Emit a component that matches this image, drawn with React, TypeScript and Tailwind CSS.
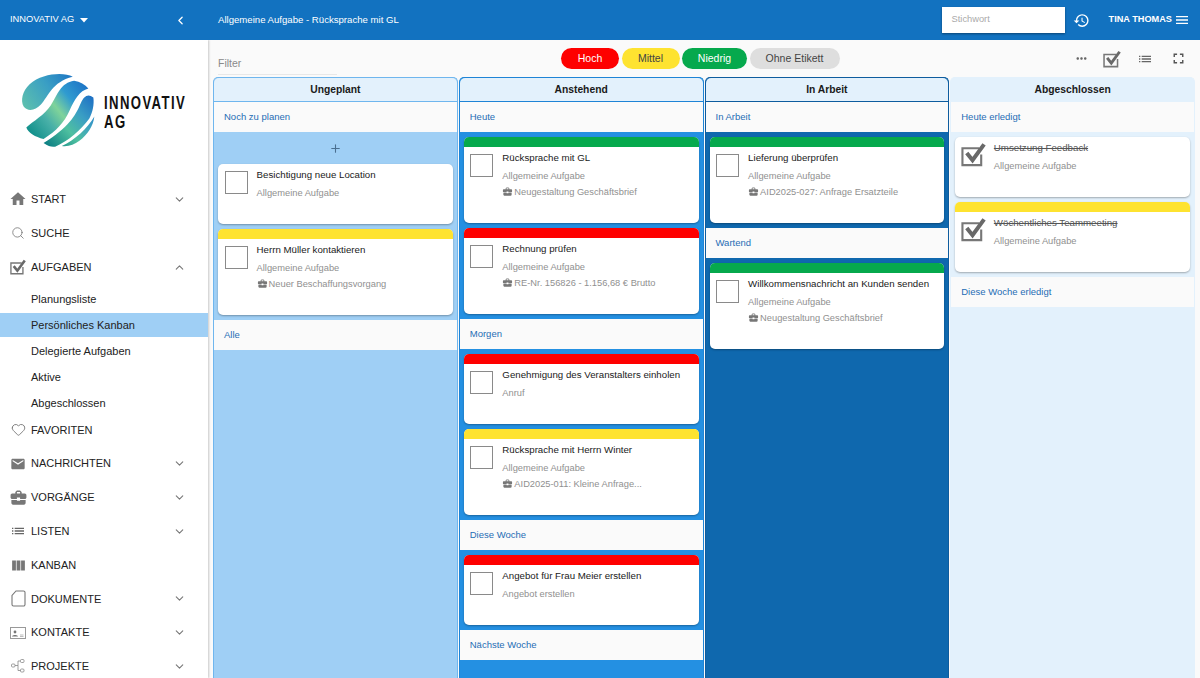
import React from 'react';
import { ChevronDown, ChevronLeft, ChevronUp, Heart, Plus, Search } from 'lucide-react';
import { MdBusinessCenter, MdEmail, MdFullscreen, MdHistory, MdHome, MdList, MdMenu, MdMoreHoriz, MdViewColumn } from 'react-icons/md';

const FONT = "font-['Liberation_Sans',Arial,sans-serif]";

function CheckSquare({ size = 23 }: { size?: number }) {
  return (
    <svg width={size} height={size} viewBox="0 0 26 26" fill="none" className="shrink-0">
      <path d="M21 13v11H1.500V6.500H19" stroke="#777" strokeWidth="2.200" />
      <path d="M6 11.500l6 7.500L24 2.500" stroke="#696969" strokeWidth="4.200" />
    </svg>
  );
}

function FileIcon() {
  return (
    <svg width="15" height="17" viewBox="0 0 15 17" fill="none">
      <path d="M5 1h7.500a1.500 1.500 0 0 1 1.500 1.500v12a1.500 1.500 0 0 1-1.500 1.500h-10A1.500 1.500 0 0 1 1 14.500V5.500z" stroke="#777" strokeWidth="1.100" />
    </svg>
  );
}

function ContactIcon() {
  return (
    <svg width="16" height="12" viewBox="0 0 16 12" fill="none">
      <rect x="0.500" y="0.500" width="15" height="11" stroke="#999" />
      <circle cx="5" cy="5" r="1.400" fill="#777" />
      <path d="M2 9.500c.5-2 5.500-2 6 0z" fill="#777" />
      <path d="M10 8h3.500M10 9.500h3.500" stroke="#aaa" strokeWidth="0.800" />
    </svg>
  );
}

function ProjectIcon() {
  return (
    <svg width="14" height="14" viewBox="0 0 14 14" fill="none" stroke="#888" strokeWidth="0.800">
      <rect x="0.500" y="5" width="3.500" height="3" rx="1" />
      <rect x="9.500" y="0.500" width="3.500" height="3" rx="1" />
      <rect x="9.500" y="10" width="3.500" height="3" rx="1" />
      <path d="M4 6.500h3V2h2.500M7 6.500v5h2.500" />
    </svg>
  );
}

function Logo() {
  return (
    <svg width="77" height="78" viewBox="60 215 230 235" className="shrink-0">
      <defs>
        <linearGradient id="bandA" gradientUnits="userSpaceOnUse" x1="70" y1="320" x2="210" y2="225">
          <stop offset="0" stopColor="#5cbfae" />
          <stop offset="0.55" stopColor="#3a9fc4" />
          <stop offset="1" stopColor="#1f78c4" />
        </linearGradient>
        <linearGradient id="bandB" gradientUnits="userSpaceOnUse" x1="85" y1="400" x2="260" y2="260">
          <stop offset="0" stopColor="#0f8f8a" />
          <stop offset="0.3" stopColor="#48b0a8" />
          <stop offset="0.5" stopColor="#7fd39a" />
          <stop offset="0.72" stopColor="#2f9bd0" />
          <stop offset="1" stopColor="#1d74c6" />
        </linearGradient>
        <linearGradient id="bandC" gradientUnits="userSpaceOnUse" x1="135" y1="435" x2="280" y2="300">
          <stop offset="0" stopColor="#0c7f83" />
          <stop offset="0.4" stopColor="#4fc0a0" />
          <stop offset="0.7" stopColor="#3a9ec4" />
          <stop offset="1" stopColor="#1f72c4" />
        </linearGradient>
      </defs>
      <path d="M218 232C190 218 125 222 88 255C66 276 60 305 70 322C82 338 105 335 122 316C145 290 155 248 218 232Z" fill="url(#bandA)" />
      <path d="M222 244C182 250 172 285 152 318C132 348 100 365 78 385C84 402 105 413 130 420C170 395 192 370 208 335C224 300 238 275 265 268C255 255 240 247 222 244Z" fill="url(#bandB)" />
      <path d="M280 295C264 282 252 290 242 312C226 350 205 385 130 432C145 442 155 445 165 443C205 425 240 395 268 358C278 340 283 315 280 295Z" fill="url(#bandC)" />
      <path d="M283 352C262 388 225 422 185 441C205 444 222 436 238 425C262 408 280 380 283 352Z" fill="url(#bandC)" />
    </svg>
  );
}

type NavEntry = { label: string; icon: React.ReactNode; chevron?: 'down' | 'up' };

const navTop: NavEntry[] = [
  { label: 'START', icon: <MdHome size={18} color="#777" />, chevron: 'down' },
  { label: 'SUCHE', icon: <Search size={14} color="#777" strokeWidth={1.400} /> },
  { label: 'AUFGABEN', icon: <CheckSquare size={16} />, chevron: 'up' },
];

const navSub = ['Planungsliste', 'Persönliches Kanban', 'Delegierte Aufgaben', 'Aktive', 'Abgeschlossen'];

const navBottom: NavEntry[] = [
  { label: 'FAVORITEN', icon: <Heart size={15} color="#666" strokeWidth={1.300} /> },
  { label: 'NACHRICHTEN', icon: <MdEmail size={16} color="#777" />, chevron: 'down' },
  { label: 'VORGÄNGE', icon: <MdBusinessCenter size={19} color="#777" />, chevron: 'down' },
  { label: 'LISTEN', icon: <MdList size={16} color="#666" />, chevron: 'down' },
  { label: 'KANBAN', icon: <MdViewColumn size={17} color="#777" /> },
  { label: 'DOKUMENTE', icon: <FileIcon />, chevron: 'down' },
  { label: 'KONTAKTE', icon: <ContactIcon />, chevron: 'down' },
  { label: 'PROJEKTE', icon: <ProjectIcon />, chevron: 'down' },
];

function NavRow({ item }: { item: NavEntry }) {
  return (
    <div className="flex h-[33.800px] shrink-0 items-center">
      <div className="flex w-[31px] justify-center pl-[5px]">{item.icon}</div>
      <span className="text-[11px] text-[#222]">{item.label}</span>
      {item.chevron === 'down' && <ChevronDown size={13} color="#777" className="ml-auto mr-[22px]" />}
      {item.chevron === 'up' && <ChevronUp size={13} color="#777" className="ml-auto mr-[22px]" />}
    </div>
  );
}

function Sidebar() {
  return (
    <aside className="flex w-[208px] shrink-0 flex-col overflow-hidden bg-white shadow-[1px_0_2px_rgba(0,0,0,0.2)]">
      <div className="flex h-[142.600px] shrink-0 items-start pl-[20px] pt-[31px]">
        <Logo />
        <div className="ml-[7px] mt-[23px] w-[82px] origin-left scale-x-[0.73] whitespace-nowrap text-[18px] font-bold leading-[19px] tracking-[1.900px] text-[#111]">
          <div>INNOVATIV</div>
          <div>AG</div>
        </div>
      </div>
      {navTop.map((item) => (
        <NavRow key={item.label} item={item} />
      ))}
      <div className="mb-[-2px] mt-[3px] flex shrink-0 flex-col gap-[2px]">
        {navSub.map((label) => (
          <div
            key={label}
            className={`flex h-[24px] items-center pl-[31px] text-[11px] text-[#222] ${label === 'Persönliches Kanban' ? 'bg-[#9fcff5]' : ''}`}
          >
            {label}
          </div>
        ))}
      </div>
      {navBottom.map((item) => (
        <NavRow key={item.label} item={item} />
      ))}
    </aside>
  );
}

type Strip = 'red' | 'yellow' | 'green' | null;
type Card = { title: string; sub: string; extra?: string; strip: Strip; done?: boolean };
type Block = { section?: string; plus?: boolean; cards?: Card[] };
type Column = { title: string; border: string; bg: string; blocks: Block[] };

const columns: Column[] = [
  {
    title: 'Ungeplant',
    border: 'border-[#6fb6ee]',
    bg: 'bg-[#9fcff5]',
    blocks: [
      { section: 'Noch zu planen', plus: true },
      {
        cards: [
          { title: 'Besichtigung neue Location', sub: 'Allgemeine Aufgabe', strip: null },
          { title: 'Herrn Müller kontaktieren', sub: 'Allgemeine Aufgabe', extra: 'Neuer Beschaffungsvorgang', strip: 'yellow' },
        ],
      },
      { section: 'Alle' },
    ],
  },
  {
    title: 'Anstehend',
    border: 'border-[#1e84d6]',
    bg: 'bg-[#2490e2]',
    blocks: [
      { section: 'Heute' },
      {
        cards: [
          { title: 'Rücksprache mit GL', sub: 'Allgemeine Aufgabe', extra: 'Neugestaltung Geschäftsbrief', strip: 'green' },
          { title: 'Rechnung prüfen', sub: 'Allgemeine Aufgabe', extra: 'RE-Nr. 156826 - 1.156,68 € Brutto', strip: 'red' },
        ],
      },
      { section: 'Morgen' },
      {
        cards: [
          { title: 'Genehmigung des Veranstalters einholen', sub: 'Anruf', strip: 'red' },
          { title: 'Rücksprache mit Herrn Winter', sub: 'Allgemeine Aufgabe', extra: 'AID2025-011: Kleine Anfrage...', strip: 'yellow' },
        ],
      },
      { section: 'Diese Woche' },
      { cards: [{ title: 'Angebot für Frau Meier erstellen', sub: 'Angebot erstellen', strip: 'red' }] },
      { section: 'Nächste Woche' },
    ],
  },
  {
    title: 'In Arbeit',
    border: 'border-[#0e5c9e]',
    bg: 'bg-[#0f68ae]',
    blocks: [
      { section: 'In Arbeit' },
      { cards: [{ title: 'Lieferung überprüfen', sub: 'Allgemeine Aufgabe', extra: 'AID2025-027: Anfrage Ersatzteile', strip: 'green' }] },
      { section: 'Wartend' },
      { cards: [{ title: 'Willkommensnachricht an Kunden senden', sub: 'Allgemeine Aufgabe', extra: 'Neugestaltung Geschäftsbrief', strip: 'green' }] },
    ],
  },
  {
    title: 'Abgeschlossen',
    border: 'border-[#e3f1fc]',
    bg: 'bg-[#e3f1fc]',
    blocks: [
      { section: 'Heute erledigt' },
      {
        cards: [
          { title: 'Umsetzung Feedback', sub: 'Allgemeine Aufgabe', strip: null, done: true },
          { title: 'Wöchentliches Teammeeting', sub: 'Allgemeine Aufgabe', strip: 'yellow', done: true },
        ],
      },
      { section: 'Diese Woche erledigt' },
    ],
  },
];

function TaskCard({ card }: { card: Card }) {
  return (
    <div className="overflow-hidden rounded-[5px] bg-white shadow-[0_1px_2px_rgba(0,0,0,0.3)]">
      {card.strip === 'red' && <div className="h-[10px] bg-[#fe0000]" />}
      {card.strip === 'yellow' && <div className="h-[10px] bg-[#fee330]" />}
      {card.strip === 'green' && <div className="h-[10px] bg-[#06a94d]" />}
      <div className={`flex px-[6.600px] pt-[5px] ${card.extra ? 'h-[76px]' : 'h-[60px]'}`}>
        <div className="w-[32px] shrink-0">
          {card.done ? (
            <div className="-ml-[1px]">
              <CheckSquare size={25} />
            </div>
          ) : (
            <div className="mt-[2px] h-[23px] w-[23px] border-[1.500px] border-[#8a8a8a]" />
          )}
        </div>
        <div className="min-w-0">
          <div className={`whitespace-nowrap text-[9.700px] leading-[12px] ${card.done ? 'text-[#555] line-through' : 'text-[#1a1a1a]'}`}>{card.title}</div>
          <div className="mt-[6px] whitespace-nowrap text-[9.300px] leading-[12px] text-[#909090]">{card.sub}</div>
          {card.extra && (
            <div className="mt-[3.500px] flex items-center gap-[1px] whitespace-nowrap text-[9.300px] leading-[12px] text-[#909090]">
              <MdBusinessCenter size={11} color="#777" />
              {card.extra}
            </div>
          )}
        </div>
      </div>
    </div>
  );
}

function KanbanColumn({ column }: { column: Column }) {
  return (
    <section className={`flex min-w-0 flex-1 flex-col rounded-t-[5px] border-x border-t ${column.border} ${column.bg}`}>
      <div className={`flex h-[24px] shrink-0 items-center justify-center rounded-t-[5px] border-b ${column.border} bg-[#e3f1fc] text-[10.300px] font-bold text-[#1a1a1a]`}>
        {column.title}
      </div>
      {column.blocks.map((block, i) => (
        <div key={i}>
          {block.section && (
            <div className="flex h-[30px] items-center bg-[#fafafa] pl-[10px] text-[9.500px] text-[#1f6db5]">{block.section}</div>
          )}
          {block.plus && (
            <div className="flex h-[32px] items-center justify-center">
              <Plus size={13} color="#4a6f90" />
            </div>
          )}
          {block.cards && (
            <div className={`flex flex-col gap-[5px] px-[4px] pb-[5px] ${i === 1 && column.title === 'Ungeplant' ? '' : 'pt-[5px]'}`}>
              {block.cards.map((card) => (
                <TaskCard key={card.title} card={card} />
              ))}
            </div>
          )}
        </div>
      ))}
    </section>
  );
}

export default function App() {
  return (
    <div className={`flex h-[678px] w-[1200px] flex-col overflow-hidden bg-[#fafafa] ${FONT}`}>
      <header className="z-10 flex h-[40px] shrink-0 items-center bg-[#1272c0] text-white">
        <div className="flex w-[208px] items-center pl-[10px]">
          <span className="text-[9.300px]">INNOVATIV AG</span>
          <svg width="8" height="5" viewBox="0 0 8 5" className="ml-[6px] mt-[1px]">
            <path d="M0 0h8L4 4.500z" fill="#fff" />
          </svg>
          <ChevronLeft size={13} strokeWidth={2.400} className="ml-auto mr-[21px]" />
        </div>
        <span className="ml-[10px] text-[9.600px]">Allgemeine Aufgabe - Rücksprache mit GL</span>
        <div className="ml-auto flex h-[26px] w-[123px] items-center bg-white pl-[10px] text-[9.300px] text-[#aaa] shadow-[0_1px_2px_rgba(0,0,0,0.4)]">
          Stichwort
        </div>
        <MdHistory size={17} className="ml-[8px]" />
        <span className="ml-[19px] text-[9.200px] font-bold">TINA THOMAS</span>
        <MdMenu size={16} className="ml-[2px] mr-[10px]" />
      </header>
      <div className="flex min-h-0 flex-1">
        <Sidebar />
        <main className="flex min-w-0 flex-1 flex-col">
          <div className="relative flex h-[37px] shrink-0 items-center pl-[10px] pr-[13px]">
            <div className="mt-[9px] h-[24px] w-[119px] border-b border-[#e8e8e8] text-[10.500px] leading-[24px] text-[#8a8a8a]">Filter</div>
            <div className="ml-[224px] flex items-center gap-[2.500px] text-[10.500px]">
              <span className="flex h-[21px] w-[58px] items-center justify-center rounded-full bg-[#fe0000] text-white">Hoch</span>
              <span className="flex h-[21px] w-[58px] items-center justify-center rounded-full bg-[#fee330] text-[#444]">Mittel</span>
              <span className="flex h-[21px] w-[65px] items-center justify-center rounded-full bg-[#06a94d] text-white">Niedrig</span>
              <span className="flex h-[21px] w-[90px] items-center justify-center rounded-full bg-[#dedede] text-[#444]">Ohne Etikett</span>
            </div>
            <div className="ml-auto flex items-center">
              <MdMoreHoriz size={15} color="#666" />
              <div className="ml-[14px]"><CheckSquare size={18} /></div>
              <MdList size={16} color="#666" className="ml-[16px]" />
              <MdFullscreen size={17} color="#555" className="ml-[17px]" />
            </div>
          </div>
          <div className="flex min-h-0 flex-1 gap-[1px] pl-[5px] pr-[5px]">
            {columns.map((column) => (
              <KanbanColumn key={column.title} column={column} />
            ))}
          </div>
        </main>
      </div>
    </div>
  );
}
